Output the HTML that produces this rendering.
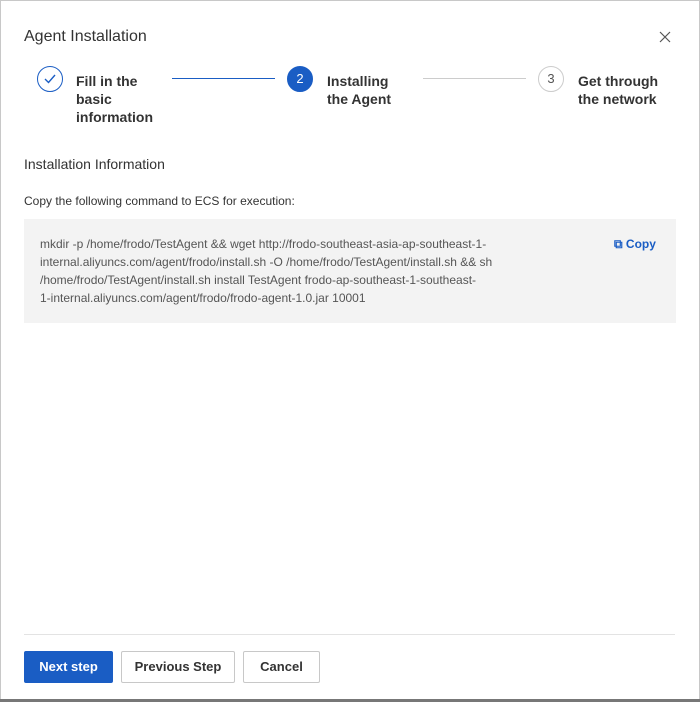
<!DOCTYPE html>
<html><head><style>
body{margin:0;width:700px;height:702px;background:#fff;font-family:"Liberation Sans",sans-serif;position:relative;overflow:hidden}
.frame{position:absolute;left:0;top:0;width:698px;height:699px;border:1px solid #c8c8c8;border-bottom:none}
.bot{position:absolute;left:0;top:699px;width:700px;height:3px;background:#777}
.abs{position:absolute}
.title{left:24px;top:28px;font-size:16px;color:#333}
.step{font-size:14px;font-weight:bold;color:#333;line-height:18px}
.circ{width:26px;height:26px;border-radius:50%;box-sizing:border-box;text-align:center;line-height:24px;font-size:13px}
.btn{top:651px;height:32px;box-sizing:border-box;font-size:13px;font-weight:bold;text-align:center;line-height:30px;border-radius:2px}
.code{left:24px;top:219px;width:652px;height:104px;background:#f3f3f3}
.code div{position:absolute;left:16px;font-size:12px;color:#555;white-space:nowrap}
</style></head><body>
<div class="frame"></div><div class="bot"></div>
<div class="abs title">Agent Installation</div>
<svg class="abs" style="left:659px;top:31px" width="12" height="12"><path d="M1 1L11 11M11 1L1 11" stroke="#555" stroke-width="1.2"/></svg>
<div class="abs circ" style="left:37px;top:66px;border:1px solid #1a5dc4"><svg width="12" height="10" style="margin-top:7px;display:block;margin-left:6px"><path d="M1 5L4.5 8.5L11 1" stroke="#1a5dc4" stroke-width="1.4" fill="none"/></svg></div>
<div class="abs step" style="left:76px;top:72px">Fill in the<br>basic<br>information</div>
<div class="abs" style="left:172px;top:78px;width:103px;height:1px;background:#1a5dc4"></div>
<div class="abs circ" style="left:287px;top:66px;background:#1a5dc4;color:#fff;border:1px solid #1a5dc4">2</div>
<div class="abs step" style="left:327px;top:72px">Installing<br>the Agent</div>
<div class="abs" style="left:423px;top:78px;width:103px;height:1px;background:#ccc"></div>
<div class="abs circ" style="left:538px;top:66px;border:1px solid #ccc;color:#555">3</div>
<div class="abs step" style="left:578px;top:72px">Get through<br>the network</div>
<div class="abs" style="left:24px;top:156px;font-size:14px;color:#333">Installation Information</div>
<div class="abs" style="left:24px;top:194px;font-size:12px;color:#333">Copy the following command to ECS for execution:</div>
<div class="abs code">
<div style="top:18px">mkdir -p /home/frodo/TestAgent &amp;&amp; wget http://frodo-southeast-asia-ap-southeast-1-</div>
<div style="top:36px">internal.aliyuncs.com/agent/frodo/install.sh -O /home/frodo/TestAgent/install.sh &amp;&amp; sh</div>
<div style="top:54px">/home/frodo/TestAgent/install.sh install TestAgent frodo-ap-southeast-1-southeast-</div>
<div style="top:72px">1-internal.aliyuncs.com/agent/frodo/frodo-agent-1.0.jar 10001</div>
<div style="left:590px;top:18px;color:#1a5dc4;font-weight:bold;font-size:12px">⧉ Copy</div>
</div>
<div class="abs" style="left:24px;top:634px;width:651px;height:1px;background:#e3e3e3"></div>
<div class="abs btn" style="left:24px;width:89px;background:#1a5dc4;color:#fff;border:1px solid #1a5dc4">Next step</div>
<div class="abs btn" style="left:121px;width:114px;border:1px solid #c8c8c8;color:#333">Previous Step</div>
<div class="abs btn" style="left:243px;width:77px;border:1px solid #c8c8c8;color:#333">Cancel</div>
</body></html>
